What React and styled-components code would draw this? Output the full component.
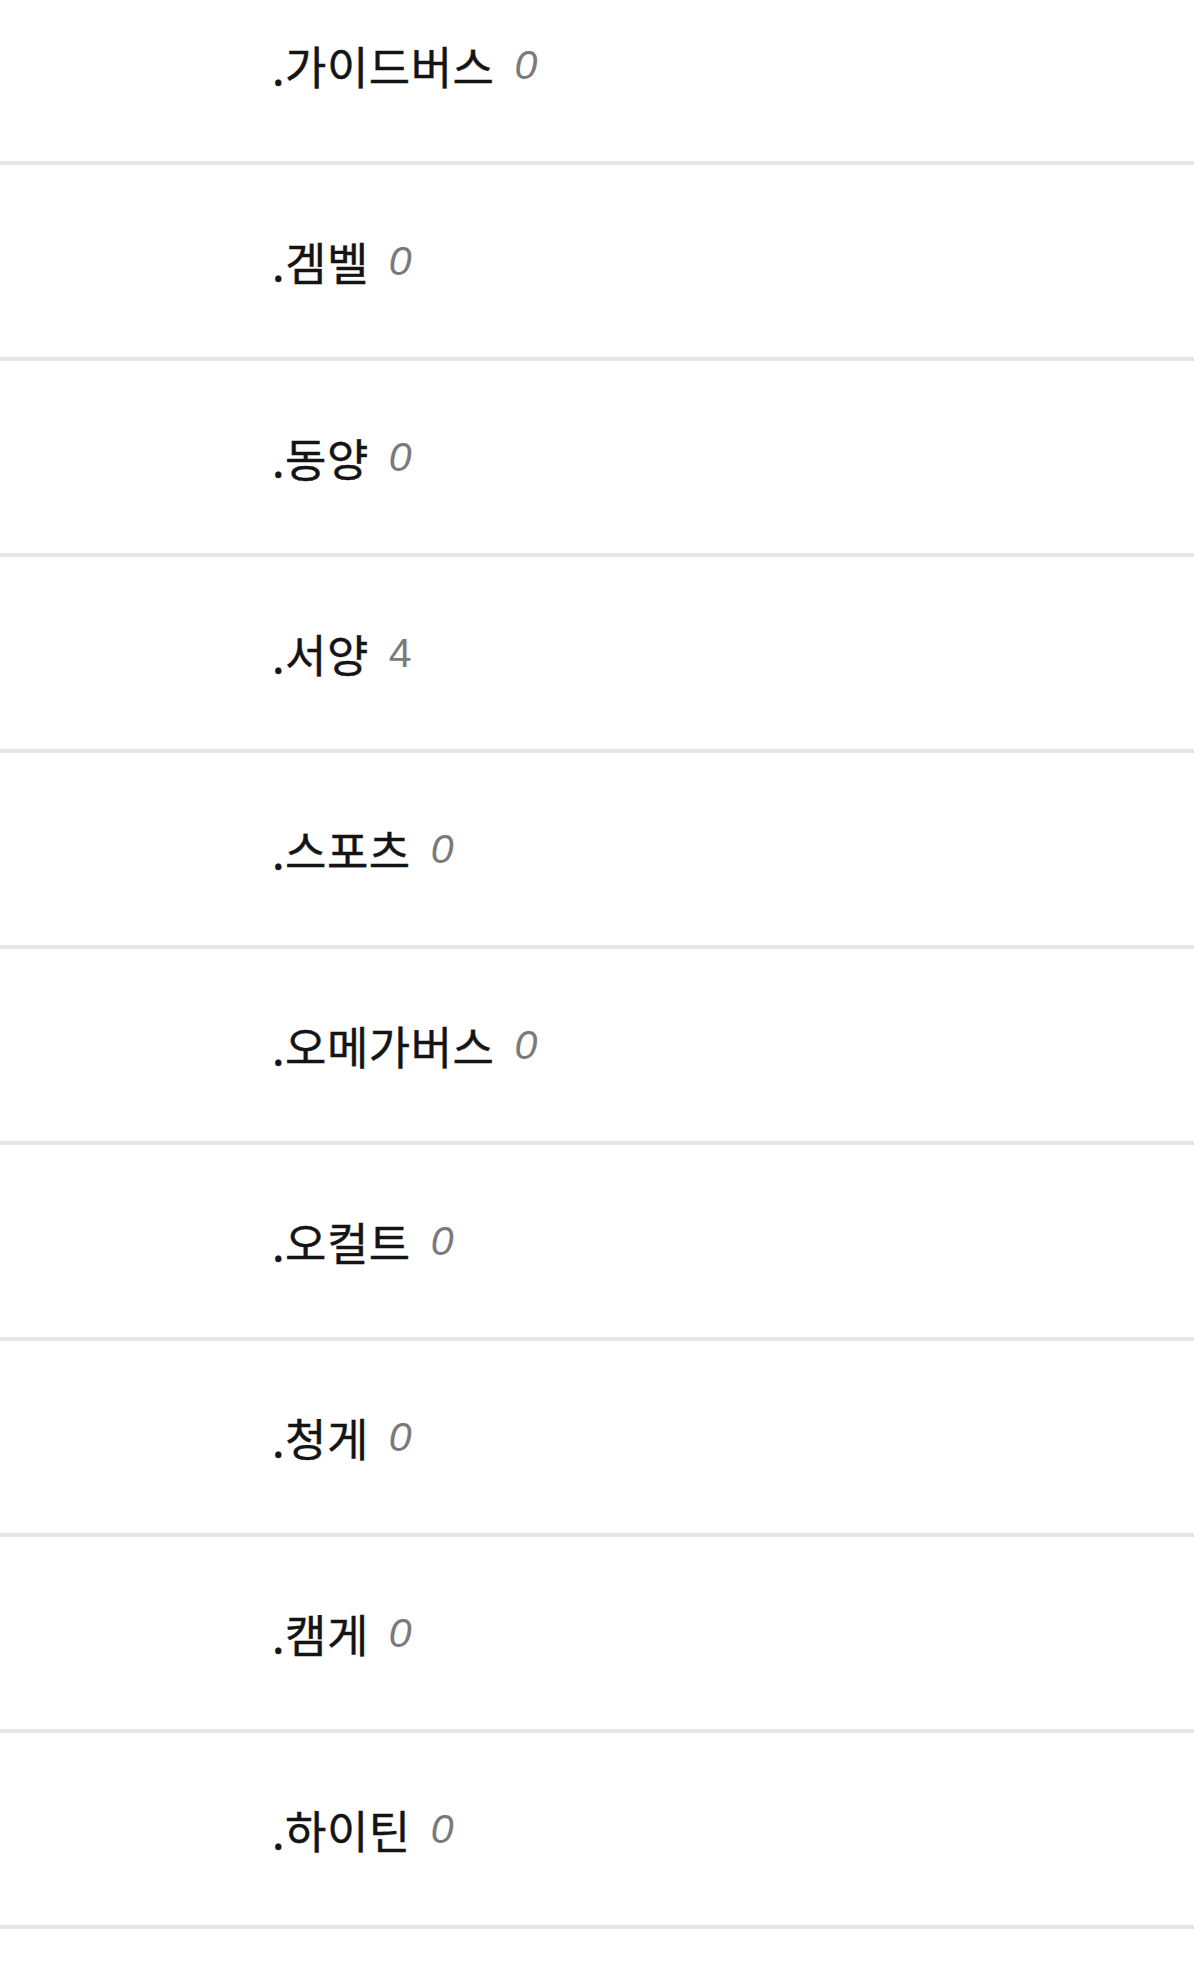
import React from "react";
import styled, { createGlobalStyle } from "styled-components";

const Global = createGlobalStyle`
  html, body { margin: 0; padding: 0; background: #ffffff; }
  body { font-family: "Noto Sans CJK KR", "Noto Sans", sans-serif; overflow: hidden; }
`;

const List = styled.ul`
  list-style: none;
  margin: -31px 0 0 0;
  padding: 0;
  width: 1194px;
`;

const Row = styled.li`
  height: 192px;
  border-bottom: 4px solid #e6e6e6;
  display: flex;
  align-items: center;
  padding-left: 272px;
  box-sizing: content-box;
`;

const Name = styled.span`
  font-size: 45px;
  font-weight: 400;
  color: #141414;
  letter-spacing: 0.5px;
  line-height: 1;
  -webkit-text-stroke: 0.4px #141414;
`;

const Count = styled.span`
  font-family: "Liberation Sans", "Noto Sans", sans-serif;
  font-size: 41px;
  color: #7a7a7a;
  margin-left: 20px;
  line-height: 1;
  font-style: ${(p) => (p.$slant ? "italic" : "normal")};
`;

const items = [
  [".가이드버스", 0],
  [".겜벨", 0],
  [".동양", 0],
  [".서양", 4],
  [".스포츠", 0],
  [".오메가버스", 0],
  [".오컬트", 0],
  [".청게", 0],
  [".캠게", 0],
  [".하이틴", 0],
];

export default function App() {
  return (
    <>
      <Global />
      <List>
        {items.map(([name, count]) => (
          <Row key={name}>
            <Name>{name}</Name>
            <Count $slant={count === 0}>{count}</Count>
          </Row>
        ))}
      </List>
    </>
  );
}
